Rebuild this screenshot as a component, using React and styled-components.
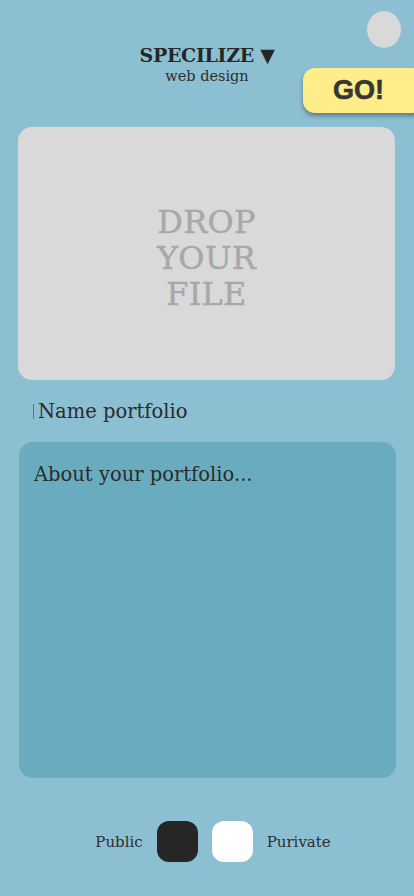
import React from "react";
import styled, { createGlobalStyle } from "styled-components";

const GlobalStyle = createGlobalStyle`
  html, body {
    margin: 0;
    padding: 0;
    background: #8dbfd2;
  }
  body {
    font-family: "DejaVu Serif", "Liberation Serif", serif;
    color: #2b2b2b;
  }
`;

const Page = styled.div`
  width: 414px;
  height: 896px;
  overflow: hidden;
  background: #8dbfd2;
  display: flex;
  flex-direction: column;
`;

const Header = styled.header`
  position: relative;
  height: 127px;
  display: flex;
  flex-direction: column;
  align-items: center;
  padding-top: 43px;
  box-sizing: border-box;
`;

const Title = styled.h1`
  margin: 0;
  font-size: 19px;
  font-weight: bold;
  letter-spacing: -0.3px;
  line-height: 24px;
  color: #262626;
`;

const Subtitle = styled.div`
  font-size: 14.5px;
  line-height: 18px;
  color: #2e2e2e;
`;

const Avatar = styled.div`
  position: absolute;
  top: 11px;
  right: 13px;
  width: 34px;
  height: 37px;
  border-radius: 50%;
  background: #d9d9d9;
`;

const GoButton = styled.button`
  position: absolute;
  top: 68px;
  right: -10px;
  width: 121px;
  height: 45px;
  border: none;
  border-radius: 12px;
  background: #ffed8a;
  box-shadow: 0 3px 4px rgba(0, 0, 0, 0.35);
  font-family: "Liberation Sans", Arial, sans-serif;
  font-weight: bold;
  font-size: 27px;
  color: #363636;
  padding: 0 10px 0 0;
  text-align: center;
  -webkit-text-stroke: 0.6px #363636;
`;

const DropZone = styled.div`
  margin: 0 19px 0 18px;
  height: 253px;
  padding-top: 9px;
  box-sizing: border-box;
  border-radius: 14px;
  background: #d9d9d9;
  display: flex;
  flex-direction: column;
  align-items: center;
  justify-content: center;
  color: #a8a8a8;
  -webkit-text-stroke: 0.4px #a8a8a8;
`;

const DropLine = styled.span`
  display: block;
  font-size: 32px;
  line-height: 36px;
  height: 36px;
  letter-spacing: 0.2px;
`;

const NameField = styled.div`
  display: flex;
  align-items: center;
  height: 62px;
  padding-left: 33px;
  font-size: 19.5px;
  color: #2b2b2b;
`;

const Caret = styled.span`
  display: inline-block;
  width: 1px;
  height: 15px;
  background: #6e6e6e;
  margin-right: 4px;
`;

const AboutBox = styled.div`
  margin: 0 18px 0 19px;
  height: 336px;
  border-radius: 14px;
  background: #6aacbf;
  padding: 21px 15px;
  box-sizing: border-box;
  font-size: 19.5px;
  color: #2b2b2b;
`;

const Visibility = styled.div`
  display: flex;
  align-items: center;
  justify-content: center;
  gap: 14px;
  margin-top: 43px;
  padding-left: 12px;
  font-size: 15px;
  color: #2e2e2e;
`;

const Swatch = styled.div`
  width: 41px;
  height: 41px;
  border-radius: 12px;
  background: ${(p) => p.color};
`;

export default function App() {
  return (
    <Page>
      <GlobalStyle />
      <Header>
        <Title>SPECILIZE ▼</Title>
        <Subtitle>web design</Subtitle>
        <Avatar />
        <GoButton>GO!</GoButton>
      </Header>
      <DropZone>
        <DropLine>DROP</DropLine>
        <DropLine>YOUR</DropLine>
        <DropLine>FILE</DropLine>
      </DropZone>
      <NameField>
        <Caret />
        Name portfolio
      </NameField>
      <AboutBox>About your portfolio...</AboutBox>
      <Visibility>
        <span>Public</span>
        <Swatch color="#262626" />
        <Swatch color="#ffffff" />
        <span>Purivate</span>
      </Visibility>
    </Page>
  );
}
